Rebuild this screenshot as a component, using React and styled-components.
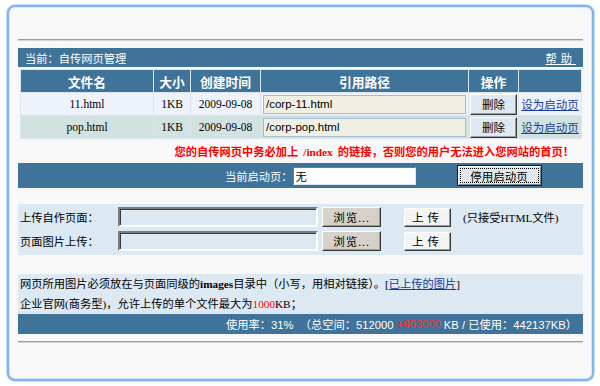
import React from 'react'
import styled, { createGlobalStyle } from 'styled-components'

const GlobalStyle = createGlobalStyle`
  html, body {
    margin: 0;
    padding: 0;
    background: #ffffff;
  }
  body {
    font-family: "Liberation Serif", "Noto Sans CJK SC", serif;
    font-size: 11.25px;
    color: #000;
  }
`

const Page = styled.div`
  padding: 5px 6px 4px 7px;
`

const Panel = styled.div`
  background: #f8f8f8;
  border: 2px solid #82b2ea;
  border-radius: 8px;
  box-shadow: inset 0 0 0 1px #d8e8f8, 0 0 0 1px #c8ddf6;
  padding: 32px 9px 36px 9px;
`

const Rule = styled.div`
  border-top: 1px solid #9c9c9c;
  border-bottom: 1px solid #d4d4d4;
  margin-top: ${p => p.$top || 0}px;
`

const TitleBar = styled.div`
  margin-top: 7px;
  height: 19px;
  background: #3f7399;
  color: #fff;
  display: flex;
  align-items: center;
  justify-content: space-between;
  padding: 0 11px 0 7px;
`

const Help = styled.a`
  color: #fff;
  text-decoration: underline;
  letter-spacing: 4px;
  margin-right: -4px;
`

const Grid = styled.table`
  width: 562px;
  margin: 2px 0 0 2px;
  border-collapse: collapse;
  table-layout: fixed;
  border-top: 1px solid #ffffff;
  border-left: 1px solid #ffffff;
  border-right: 1px solid #8a8a8a;
  border-bottom: 1px solid #8a8a8a;
`

const Th = styled.th`
  background: #3f7399;
  color: #fff;
  font-weight: bold;
  font-size: 12.75px;
  height: 22px;
  padding: 0;
  border: 1px solid #dbe5ee;
`

const Row = styled.tr`
  background: ${p => (p.$alt ? '#d1e2e0' : '#eef3fb')};
`

const Td = styled.td`
  height: 22px;
  padding: 0;
  text-align: ${p => (p.$left ? 'left' : 'center')};
  border: 1px solid #dbe5ee;
  white-space: nowrap;
  font-size: 11.5px;
`

const PathInput = styled.input`
  box-sizing: border-box;
  width: 203px;
  height: 19px;
  margin-left: 2px;
  vertical-align: middle;
  border: 1px solid #a5bbd2;
  background: #efefe4;
  font-family: "Liberation Sans", Arial, sans-serif;
  font-size: 11.5px;
  padding: 0 2px;
  color: #000;
`

const RaisedButton = styled.button`
  box-sizing: border-box;
  width: ${p => p.$w}px;
  height: ${p => p.$h}px;
  margin-left: ${p => p.$ml || 0}px;
  padding: 0;
  background: ${p => p.$bg || '#dfe8f0'};
  border: 1px solid;
  border-color: #ffffff #3a3a3a #3a3a3a #ffffff;
  box-shadow: inset -1px -1px 0 #9a9a9a;
  font-family: "Liberation Serif", "Noto Sans CJK SC", serif;
  font-size: 11.5px;
  color: #000;
  vertical-align: middle;
  letter-spacing: ${p => p.$ls || 0}px;
`

const Link = styled.a`
  color: #1d3a98;
  text-decoration: underline;
`

const Notice = styled.div`
  height: 24px;
  line-height: 26px;
  text-align: right;
  padding-right: 9px;
  color: #ff0000;
  font-weight: bold;
  font-size: 11.25px;
  white-space: nowrap;
`

const Code = styled.span`
  font-family: "Liberation Serif", serif;
  margin: 0 5px;
`

const StartBar = styled.div`
  height: 25px;
  background: #3f7399;
  color: #fff;
  display: flex;
  align-items: center;
  padding-left: 207px;
`

const StartInput = styled.input`
  box-sizing: border-box;
  width: 123px;
  height: 18px;
  margin-left: 0;
  border: 1px solid;
  border-color: #7a7a7a #e6e6e6 #e6e6e6 #7a7a7a;
  background: #fff;
  font-family: "Noto Sans CJK SC", sans-serif;
  font-size: 11.25px;
  padding: 0 2px;
`

const StopButton = styled(RaisedButton)`
  border: 1px solid #1a1a1a;
  box-shadow: inset 1px 1px 0 #ffffff, inset -1px -1px 0 #8a8a8a;
  outline: 1px dotted #000;
  outline-offset: -4px;
`

const UploadPanel = styled.div`
  margin-top: 16px;
  background: #dce8f2;
  padding: 1px 2px 2px;
`

const UploadRow = styled.div`
  display: flex;
  align-items: center;
  height: 24px;
`

const Label = styled.span`
  width: 98px;
`

const FileBox = styled.div`
  box-sizing: border-box;
  width: 200px;
  height: 20px;
  border: 2px solid;
  border-color: #7c7c7c #ffffff #ffffff #7c7c7c;
  box-shadow: inset 1px 1px 0 #3c3c3c;
`

const Hint = styled.span`
  margin-left: 12px;
`

const InfoPanel = styled.div`
  margin-top: 19px;
  background: #dce8f2;
`

const InfoLine = styled.div`
  height: 20px;
  line-height: 21px;
  padding-left: 2px;
  white-space: nowrap;
`

const Red = styled.span`
  color: ${p => p.$c || '#ff0000'};
`

const UsageBar = styled.div`
  height: 20px;
  background: #3f7399;
  color: #fff;
  display: flex;
  align-items: center;
  justify-content: flex-end;
  padding-right: 6px;
  white-space: pre;
  font-family: "Liberation Sans", "Noto Sans CJK SC", sans-serif;
  font-size: 11.25px;
`

const files = [
  { name: '11.html', path: '/corp-11.html' },
  { name: 'pop.html', path: '/corp-pop.html' },
]

export default function App() {
  return (
    <>
      <GlobalStyle />
      <Page>
        <Panel>
          <Rule />
          <TitleBar>
            <span>当前：自传网页管理</span>
            <Help>帮助</Help>
          </TitleBar>
          <Grid>
            <colgroup>
              <col style={{ width: 133 }} />
              <col style={{ width: 37 }} />
              <col style={{ width: 70 }} />
              <col style={{ width: 208 }} />
              <col style={{ width: 50 }} />
              <col style={{ width: 63 }} />
            </colgroup>
            <thead>
              <tr>
                <Th>文件名</Th>
                <Th>大小</Th>
                <Th>创建时间</Th>
                <Th>引用路径</Th>
                <Th>操作</Th>
                <Th />
              </tr>
            </thead>
            <tbody>
              {files.map((f, i) => (
                <Row key={f.name} $alt={i % 2 === 1}>
                  <Td>{f.name}</Td>
                  <Td>1KB</Td>
                  <Td>2009-09-08</Td>
                  <Td $left>
                    <PathInput readOnly defaultValue={f.path} />
                  </Td>
                  <Td>
                    <RaisedButton $w={47} $h={21}>删除</RaisedButton>
                  </Td>
                  <Td>
                    <Link>设为启动页</Link>
                  </Td>
                </Row>
              ))}
            </tbody>
          </Grid>
          <Notice>
            您的自传网页中务必加上<Code>/index</Code>的链接，否则您的用户无法进入您网站的首页！
          </Notice>
          <StartBar>
            <span>当前启动页：</span>
            <StartInput readOnly defaultValue="无" />
            <StopButton $w={85} $h={21} $ml={41}>停用启动页</StopButton>
          </StartBar>
          <UploadPanel>
            <UploadRow>
              <Label>上传自作页面：</Label>
              <FileBox />
              <RaisedButton $w={59} $h={20} $bg="#d6d2ca" $ls={1} $ml={4}>
                浏览...
              </RaisedButton>
              <RaisedButton $w={47} $h={19} $bg="#f4f4f4" $ls={4} $ml={23}>
                上传
              </RaisedButton>
              <Hint>(只接受HTML文件)</Hint>
            </UploadRow>
            <UploadRow>
              <Label>页面图片上传：</Label>
              <FileBox />
              <RaisedButton $w={59} $h={20} $bg="#d6d2ca" $ls={1} $ml={4}>
                浏览...
              </RaisedButton>
              <RaisedButton $w={47} $h={19} $bg="#f4f4f4" $ls={4} $ml={23}>
                上传
              </RaisedButton>
            </UploadRow>
          </UploadPanel>
          <InfoPanel>
            <InfoLine>
              网页所用图片必须放在与页面同级的<b>images</b>目录中（小写，用相对链接）。[<Link>已上传的图片</Link>]
            </InfoLine>
            <InfoLine>
              企业官网(商务型)，允许上传的单个文件最大为<Red>1000</Red>KB；
            </InfoLine>
          </InfoPanel>
          <UsageBar>
            使用率：31%  （总空间：512000 <Red $c="#ff2a2a">+953000</Red> KB / 已使用：442137KB）
          </UsageBar>
          <Rule $top={7} />
        </Panel>
      </Page>
    </>
  )
}
